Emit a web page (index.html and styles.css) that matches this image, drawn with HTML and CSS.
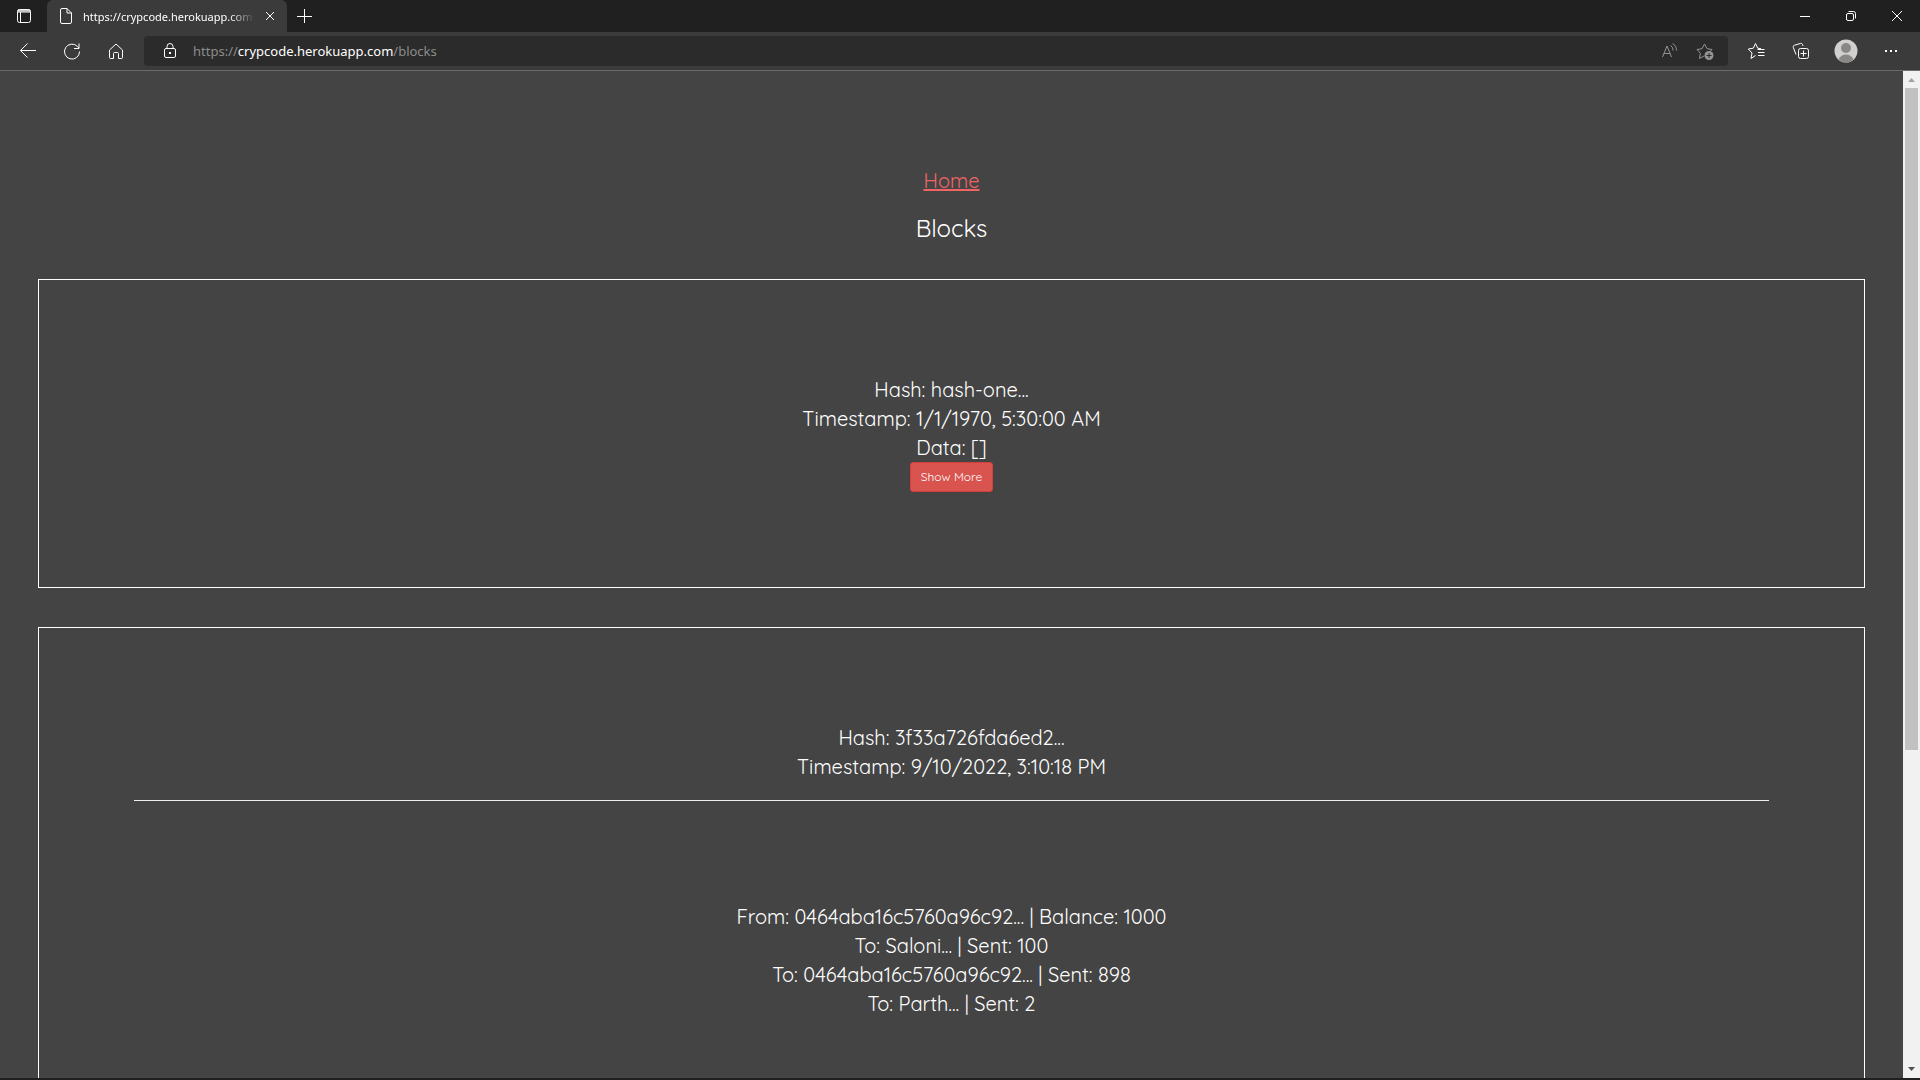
FILE: index.html
```html
<!DOCTYPE html>
<html lang="en">
<head>
<meta charset="utf-8">
<title>Blocks</title>
<link rel="stylesheet" href="styles.css">
</head>
<body>
<div class="browser">
  <header class="tabstrip">
    <button class="icon-btn tab-actions" aria-label="Tab actions"><svg width="16" height="16" viewBox="0 0 16 16"><rect x="1.5" y="1.5" width="13" height="13" rx="2"/><path d="M1.5 3h13M2 2h12M2 4h12M4.5 4v10.500"/></svg></button>
    <div class="tab">
      <svg width="14" height="18" viewBox="0 0 14 18"><path d="M3 1.500h5l4.500 4.500v9a1.500 1.500 0 0 1-1.500 1.500H3A1.500 1.500 0 0 1 1.500 15V3A1.500 1.500 0 0 1 3 1.500zM8 1.500V6h4.500"/></svg>
      <span class="tab-title">https://crypcode.herokuapp.com</span>
      <button class="tab-close" aria-label="Close tab"><svg width="10" height="10" viewBox="0 0 10 10"><path d="M1 1l8 8M9 1l-8 8"/></svg></button>
    </div>
    <button class="icon-btn new-tab" aria-label="New tab"><svg width="16" height="16" viewBox="0 0 16 16"><path d="M8.500 1v14M1 8.500h15"/></svg></button>
    <div class="window-controls">
      <button class="icon-btn" aria-label="Minimize"><svg width="10" height="10" viewBox="0 0 10 10"><path d="M0 5.500h10"/></svg></button>
      <button class="icon-btn" aria-label="Restore"><svg width="12" height="12" viewBox="0 0 12 12"><rect x="1.500" y="3.500" width="7" height="7" rx="1.500"/><path d="M3.500 1.500H8.500A2 2 0 0 1 10.500 3.500V8.500"/></svg></button>
      <button class="icon-btn" aria-label="Close"><svg width="12" height="12" viewBox="0 0 12 12"><path d="M1 1l10 10M11 1L1 11"/></svg></button>
    </div>
  </header>
  <nav class="toolbar">
    <button class="icon-btn nav-btn" aria-label="Back"><svg width="18" height="18" viewBox="0 0 18 18"><path d="M17 8.500H1.500M8.500 1.500l-7 7 7 7"/></svg></button>
    <button class="icon-btn nav-btn" aria-label="Refresh"><svg width="18" height="18" viewBox="0 0 18 18"><path d="M16.500 9.500A7.500 7.500 0 1 1 14.500 4.500L15.800 6M16 1.500V6.500H11"/></svg></button>
    <button class="icon-btn nav-btn" aria-label="Home"><svg width="18" height="18" viewBox="0 0 18 18"><path d="M2.500 8L9 2l6.500 6v7.500a1 1 0 0 1-1 1h-3v-5a1 1 0 0 0-1-1h-3a1 1 0 0 0-1 1v5h-3a1 1 0 0 1-1-1z"/></svg></button>
    <div class="address">
      <button class="icon-btn addr-btn" aria-label="Site information"><svg width="14" height="18" viewBox="0 0 14 18"><rect x="1.500" y="6.500" width="11" height="9" rx="1.500"/><path d="M4 6.500V4.500a3 3 0 0 1 6 0v2"/><rect class="solid" x="6" y="10" width="2" height="2"/></svg></button>
      <span class="url">https://<span class="url-host">crypcode.herokuapp.com</span>/blocks</span>
      <button class="icon-btn addr-btn dim" aria-label="Read aloud"><svg width="18" height="18" viewBox="0 0 18 18"><path d="M2.500 15L7 4l4.500 11M4 11.500h6M10.500 3.500a5 5 0 0 1 2.500 5M12.500 1.500a8 8 0 0 1 4 7"/></svg></button>
      <button class="icon-btn addr-btn dim" aria-label="Add to favorites"><svg width="18" height="18" viewBox="0 0 18 18"><path d="M8 14l-4.500 2.500.8-5.300L1 7.500l5-.8L8.500 2 11 6.700l5 .8-1.500 1.500"/><circle class="solid" cx="13" cy="13.500" r="4.500"/><path class="knockout" d="M13 11v5M10.500 13.500h5"/></svg></button>
    </div>
    <div class="tools">
      <button class="icon-btn tool-btn" aria-label="Favorites"><svg width="18" height="18" viewBox="0 0 18 18"><path d="M8.500 13.500L4 16.500l1-5.500-3.700-4 5-.8L8.500 1.500l2.200 4.700 3.300.5M10.500 7.500h7M11 10.500h6.500M11 13.500h6.500"/></svg></button>
      <button class="icon-btn tool-btn" aria-label="Collections"><svg width="18" height="18" viewBox="0 0 18 18"><path d="M4 12.500L1.300 5.500A1.700 1.700 0 0 1 2.300 3.300L8.500 1.400a1.700 1.700 0 0 1 2 1L11 4"/><rect x="6.500" y="6.500" width="10" height="10" rx="2"/><path d="M11.500 8.500v6M8.500 11.500h6"/></svg></button>
      <button class="icon-btn tool-btn" aria-label="Profile"><svg class="avatar" width="24" height="24" viewBox="0 0 24 24"><circle class="disc" cx="12" cy="12" r="11.500"/><circle class="person" cx="12" cy="9" r="5"/><path class="person" d="M4.500 20.500C6 17 9 15.500 12 15.500s6 1.500 7.500 5A11.500 11.500 0 0 1 4.500 20.500z"/></svg></button>
      <button class="icon-btn tool-btn" aria-label="Settings and more"><svg width="14" height="4" viewBox="0 0 14 4"><path class="solid" d="M1 1h2v2H1zM6 1h2v2H6zM11 1h2v2h-2z"/></svg></button>
    </div>
  </nav>
  <div class="viewport">
    <main class="page">
      <div class="intro">
        <a class="home-link" href="/">Home</a>
        <h1 class="title">Blocks</h1>
      </div>
      <section class="block">
        <div>Hash: hash-one...</div>
        <div>Timestamp: 1/1/1970, 5:30:00 AM</div>
        <div>Data: []</div>
        <button class="show-more">Show More</button>
      </section>
      <section class="block">
        <div>Hash: 3f33a726fda6ed2...</div>
        <div>Timestamp: 9/10/2022, 3:10:18 PM</div>
        <hr class="divider">
        <div class="transaction">
          <div>From: 0464aba16c5760a96c92... | Balance: 1000</div>
          <div>To: Saloni... | Sent: 100</div>
          <div>To: 0464aba16c5760a96c92... | Sent: 898</div>
          <div>To: Parth... | Sent: 2</div>
        </div>
      </section>
    </main>
    <div class="scrollbar" aria-hidden="true">
      <svg class="arrow" width="17" height="17" viewBox="0 0 17 17"><path class="arrow-up" d="M5 11h7L8.500 7z"/></svg>
      <div class="track"><div class="thumb"></div></div>
      <svg class="arrow" width="17" height="17" viewBox="0 0 17 17"><path class="arrow-down" d="M5 6h7L8.500 10z"/></svg>
    </div>
  </div>
</div>
</body>
</html>
```
FILE: styles.css
```css
* { box-sizing: border-box; }

body {
  margin: 0;
  background: #202020;
  color: #fff;
  font-family: "Noto Sans", sans-serif;
}

button {
  margin: 0;
  border: 0;
  background: none;
  color: inherit;
  font-family: inherit;
}

svg {
  display: block;
  flex: none;
  fill: none;
  stroke: currentColor;
  stroke-width: 1;
  stroke-linejoin: round;
}

.solid { fill: currentColor; stroke: none; }

.browser {
  display: flex;
  flex-direction: column;
  height: 100vh;
  padding-bottom: 2px;
}

.icon-btn {
  display: flex;
  flex: none;
  align-items: center;
  justify-content: center;
  padding: 0;
}

/* Tab strip */
.tabstrip {
  display: flex;
  flex: none;
  height: 32px;
  background: #202020;
}

.tab-actions { width: 47px; }
.new-tab { width: 34px; }

.tab {
  display: flex;
  align-items: center;
  gap: 10px;
  width: 240px;
  padding: 0 12px;
  border-radius: 6px 6px 0 0;
  background: #3b3b3b;
}

.tab-title {
  flex: 1;
  font-size: 11px;
  white-space: nowrap;
  mask-image: linear-gradient(to right, #000 85%, transparent);
}

.tab-close { padding: 0; }

.window-controls {
  display: flex;
  margin-left: auto;
}

.window-controls .icon-btn { width: 46px; }

/* Toolbar */
.toolbar {
  display: flex;
  flex: none;
  align-items: center;
  height: 39px;
  padding: 0 7px 0 6px;
  border-bottom: 1px solid #6b6b6b;
  background: #3b3b3b;
}

.nav-btn { width: 44px; height: 30px; }

.address {
  display: flex;
  flex: 1;
  align-items: center;
  height: 30px;
  margin: 0 5px 0 6px;
  padding: 0 5px 0 8px;
  border-radius: 4px;
  background: #2b2b2b;
}

.addr-btn { width: 36px; height: 30px; }

.url {
  flex: 1;
  padding-left: 5px;
  color: #8c8c8c;
  font-size: 13px;
}

.url-host { color: #fff; }
.dim { color: #949494; }
.knockout { stroke: #2b2b2b; }

.tools { display: flex; }
.tool-btn { width: 45px; height: 30px; }

.avatar { stroke: none; }
.disc { fill: #d2d0ce; }
.person { fill: #8a8886; }

/* Page */
.viewport {
  display: flex;
  flex: 1;
  min-height: 0;
}

.page {
  flex: 1;
  overflow: hidden;
  background: #444;
  font-family: Quicksand, Lato, sans-serif;
  font-size: 20px;
  line-height: 29px;
  text-align: center;
}

.intro { padding-top: 5%; }

.home-link {
  color: #f06464;
  text-decoration-thickness: 2px;
}

.title {
  margin: 20px 0 0;
  font-size: 24px;
  font-weight: 400;
  line-height: 26px;
}

.block {
  margin: 2%;
  padding: 5%;
  border: 1px solid #fff;
}

.show-more {
  display: block;
  height: 30px;
  margin: 0 auto;
  padding: 0 10px;
  border: 1px solid #d43f3a;
  border-radius: 3px;
  background: #d9534f;
  font-size: 12px;
  line-height: 18px;
}

.divider {
  margin: 19px 0 20px;
  border: 0;
  border-top: 1px solid #eee;
}

.transaction { padding: 5%; }

/* Scrollbar */
.scrollbar {
  display: flex;
  flex: none;
  flex-direction: column;
  width: 17px;
  background: #f1f1f1;
}

.arrow { stroke: none; }
.arrow-up { fill: #a3a3a3; }
.arrow-down { fill: #505050; }

.track { flex: 1; padding: 0 2px; }
.thumb { height: 68%; background: #c1c1c1; }
```
